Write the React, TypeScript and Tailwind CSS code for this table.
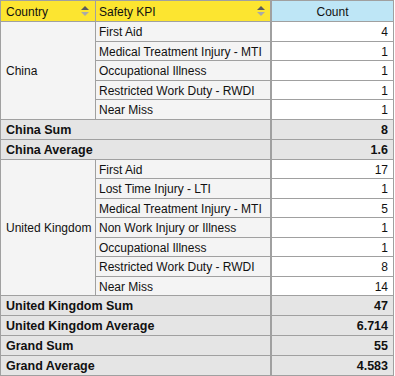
import React from "react";

const border = "border-[#a0a0a0]";

function SortIcon() {
  return (
    <svg width="8" height="10" viewBox="0 0 8 10" className="shrink-0">
      <polygon points="0,4 4,0 8,4" fill="#5c5c5c" />
      <polygon points="0,6 8,6 4,10" fill="#a9a9a9" />
    </svg>
  );
}

type Group = { country: string; rows: [string, number][]; sum: string; avg: string };

const groups: Group[] = [
  {
    country: "China",
    rows: [
      ["First Aid", 4],
      ["Medical Treatment Injury - MTI", 1],
      ["Occupational Illness", 1],
      ["Restricted Work Duty - RWDI", 1],
      ["Near Miss", 1],
    ],
    sum: "8",
    avg: "1.6",
  },
  {
    country: "United Kingdom",
    rows: [
      ["First Aid", 17],
      ["Lost Time Injury - LTI", 1],
      ["Medical Treatment Injury - MTI", 5],
      ["Non Work Injury or Illness", 1],
      ["Occupational Illness", 1],
      ["Restricted Work Duty - RWDI", 8],
      ["Near Miss", 14],
    ],
    sum: "47",
    avg: "6.714",
  },
];

export default function App() {
  const cells: React.ReactNode[] = [];
  groups.forEach((g, gi) => {
    g.rows.forEach(([kpi, n], i) => {
      if (i === 0) {
        cells.push(
          <div
            key={`c${gi}`}
            className={`${g.rows.length === 5 ? "row-span-5" : "row-span-7"} bg-[#f4f4f4] border-r border-b ${border} flex items-center pl-[5px] pt-[2px]`}
          >
            {g.country}
          </div>
        );
      }
      cells.push(
        <div key={`k${gi}-${i}`} className={`bg-[#f4f4f4] border-r-2 border-b ${border} flex items-center pl-[3px] pt-[2px] whitespace-nowrap`}>
          {kpi}
        </div>
      );
      cells.push(
        <div key={`n${gi}-${i}`} className={`bg-white border-r border-b ${border} flex items-center justify-end pr-[5px] pt-[2px]`}>
          {n}
        </div>
      );
    });
    cells.push(
      <div key={`s${gi}`} className={`col-span-2 bg-[#e5e5e5] border-r-2 border-b ${border} flex items-center pl-[5px] pt-[2px] font-bold text-[12.5px]`}>
        {g.country} Sum
      </div>
    );
    cells.push(
      <div key={`sv${gi}`} className={`bg-[#e5e5e5] border-r border-b ${border} flex items-center justify-end pr-[5px] pt-[2px] font-bold text-[12.5px]`}>
        {g.sum}
      </div>
    );
    cells.push(
      <div key={`a${gi}`} className={`col-span-2 bg-[#e5e5e5] border-r-2 border-b ${border} flex items-center pl-[5px] pt-[2px] font-bold text-[12.5px]`}>
        {g.country} Average
      </div>
    );
    cells.push(
      <div key={`av${gi}`} className={`bg-[#e5e5e5] border-r border-b ${border} flex items-center justify-end pr-[5px] pt-[2px] font-bold text-[12.5px]`}>
        {g.avg}
      </div>
    );
  });

  return (
    <div className="w-[395px] h-[376px] bg-white text-[12px] text-[#111] leading-none" style={{ fontFamily: '"Liberation Sans", Arial, sans-serif' }}>
      <div
        className={`w-[394px] border-l border-t ${border} grid grid-cols-[95px_176px_122px] grid-rows-[21px_repeat(5,19.5px)_20px_20px_repeat(7,19.5px)_repeat(4,20px)]`}
      >
        <div className={`bg-[#fce530] border-r border-b ${border} flex items-center justify-between pl-[5px] pr-[6px]`}>
          <span className="pt-[2px]">Country</span>
          <SortIcon />
        </div>
        <div className={`bg-[#fce530] border-r-2 border-b ${border} flex items-center justify-between pl-[3px] pr-[5px]`}>
          <span className="pt-[2px]">Safety KPI</span>
          <SortIcon />
        </div>
        <div className={`bg-[#bee6f6] border-r border-b ${border} flex items-center justify-center pt-[2px]`}>Count</div>
        {cells}
        <div className={`col-span-2 bg-[#e5e5e5] border-r-2 border-b ${border} flex items-center pl-[5px] pt-[2px] font-bold text-[12.5px]`}>Grand Sum</div>
        <div className={`bg-[#e5e5e5] border-r border-b ${border} flex items-center justify-end pr-[5px] pt-[2px] font-bold text-[12.5px]`}>55</div>
        <div className={`col-span-2 bg-[#e5e5e5] border-r-2 border-b ${border} flex items-center pl-[5px] pt-[2px] font-bold text-[12.5px]`}>Grand Average</div>
        <div className={`bg-[#e5e5e5] border-r border-b ${border} flex items-center justify-end pr-[5px] pt-[2px] font-bold text-[12.5px]`}>4.583</div>
      </div>
    </div>
  );
}
